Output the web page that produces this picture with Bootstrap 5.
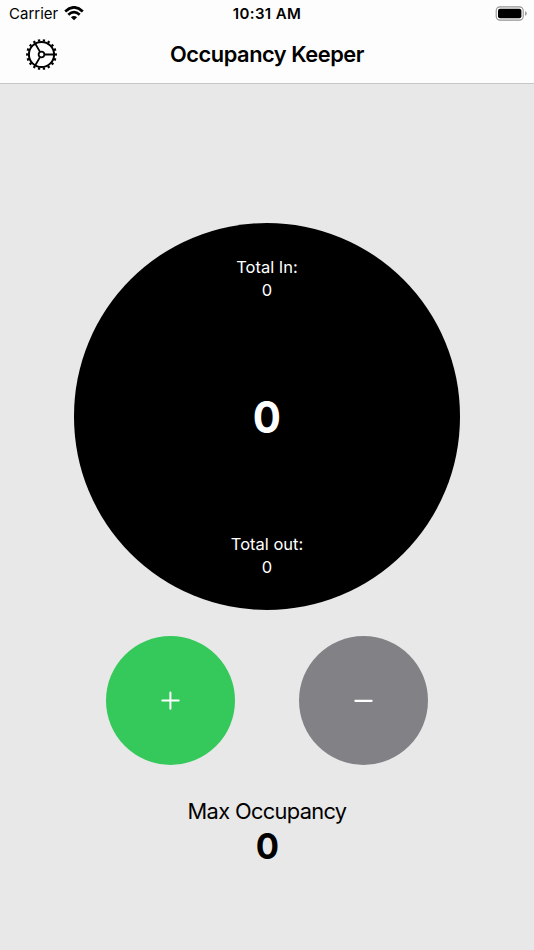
<!DOCTYPE html>
<html lang="en">
<head>
<meta charset="utf-8">
<meta name="viewport" content="width=device-width, initial-scale=1">
<title>Occupancy Keeper</title>
<link href="https://cdn.jsdelivr.net/npm/bootstrap@5.3.0/dist/css/bootstrap.min.css" rel="stylesheet">
<style>
body{font-family:Inter,"Liberation Sans",sans-serif;background:#e8e8e8;color:#000;height:950px;overflow:hidden}
.topbar{background:#fdfdfd;height:84px;border-bottom:1px solid #c6c6c6}
.status-row{height:27px;font-size:15px;line-height:27px;padding:0 9px}
.status-row .clock{font-weight:600;letter-spacing:.4px}
.wifi{margin-left:6px}
.battery{margin-right:-2px}
.title-row{height:55px;padding:0 26px}
.app-title{font-size:21.8px;font-weight:600;line-height:55px;letter-spacing:-.45px}
.side{width:31px}
.dial{width:386.6px;height:386.6px;margin-top:139.4px;padding:33px 0 31px;background:#000;color:#fff}
.tally{font-size:16.5px;line-height:23px;letter-spacing:0}
.current{font-size:44px;font-weight:700;line-height:48px;padding-bottom:2px;transform:scaleX(.95)}
.pads{gap:64px;margin-top:26px}
.pad{width:129px;height:129px;color:#fff}
.pad-in{background:#35c85b}
.pad-out{background:#828185}
.limit{margin-top:29px}
.limit-label{font-size:21.8px;line-height:34px;letter-spacing:-.65px}
.limit-value{font-size:36px;font-weight:700;line-height:36px;transform:scaleX(.96)}
</style>
</head>
<body class="d-flex flex-column">
<header class="topbar flex-shrink-0">
  <div class="status-row d-flex align-items-center">
    <div class="col d-flex align-items-center">
      <span class="carrier">Carrier</span>
      <svg class="wifi" width="20" height="15" viewBox="0 0 20 15" fill="none" stroke="#000" stroke-width="2.7"><path d="M1.2 5.4Q10-2.7 18.8 5.4M4.3 8.7Q10 3.5 15.7 8.7"/><path d="M10 14.3L6.9 11.3Q10 8.5 13.1 11.3Z" fill="#000" stroke="none"/></svg>
    </div>
    <div class="clock">10:31 AM</div>
    <div class="col d-flex justify-content-end">
      <svg class="battery" width="32" height="15" viewBox="0 0 32 15"><rect x="1.2" y=".9" width="27" height="13.2" rx="3.8" fill="none" stroke="#929292" stroke-width="1.1"/><rect x="3" y="2.7" width="23.4" height="9.6" rx="2"/><path d="M30.1 5.2Q31.7 5.8 31.7 7.5T30.1 9.8Z" fill="#929292"/></svg>
    </div>
  </div>
  <div class="title-row d-flex align-items-center justify-content-between">
    <button class="btn p-0 border-0 side d-flex" aria-label="Settings">
      <svg width="31" height="31" viewBox="-15.5 -15.5 31 31" fill="none" stroke="#000"><circle r="12.6" stroke-width="2"/><circle r="14.3" stroke-width="2.2" pathLength="180" stroke-dasharray="4.6 5.4" stroke-dashoffset="2.3"/><circle r="2.9" stroke-width="1.8"/><path d="M3 0H12M-1.5 -2.6L-6.2 -10.7M-1.5 2.6L-6.2 10.7" stroke-width="1.8"/></svg>
    </button>
    <h1 class="app-title m-0">Occupancy Keeper</h1>
    <div class="side"></div>
  </div>
</header>
<main class="d-flex flex-column align-items-center">
  <section class="dial rounded-circle d-flex flex-column align-items-center justify-content-between flex-shrink-0 text-center">
    <div class="tally">Total In:<br>0</div>
    <div class="current">0</div>
    <div class="tally">Total out:<br>0</div>
  </section>
  <div class="pads d-flex">
    <button class="pad pad-in rounded-circle border-0 p-0 d-flex align-items-center justify-content-center" aria-label="Add"><svg width="19" height="19" viewBox="0 0 19 19" fill="none" stroke="#fff" stroke-width="2" stroke-linecap="round"><path d="M1.3 9.6H17.7M9.4 1.4V17.8"/></svg></button>
    <button class="pad pad-out rounded-circle border-0 p-0 d-flex align-items-center justify-content-center" aria-label="Remove"><svg width="19" height="19" viewBox="0 0 19 19" fill="none" stroke="#fff" stroke-width="2.2" stroke-linecap="round"><path d="M1.4 9.8H17.6"/></svg></button>
  </div>
  <section class="limit text-center">
    <div class="limit-label">Max Occupancy</div>
    <div class="limit-value">0</div>
  </section>
</main>
<script src="https://cdn.jsdelivr.net/npm/bootstrap@5.3.0/dist/js/bootstrap.bundle.min.js"></script>
</body>
</html>
